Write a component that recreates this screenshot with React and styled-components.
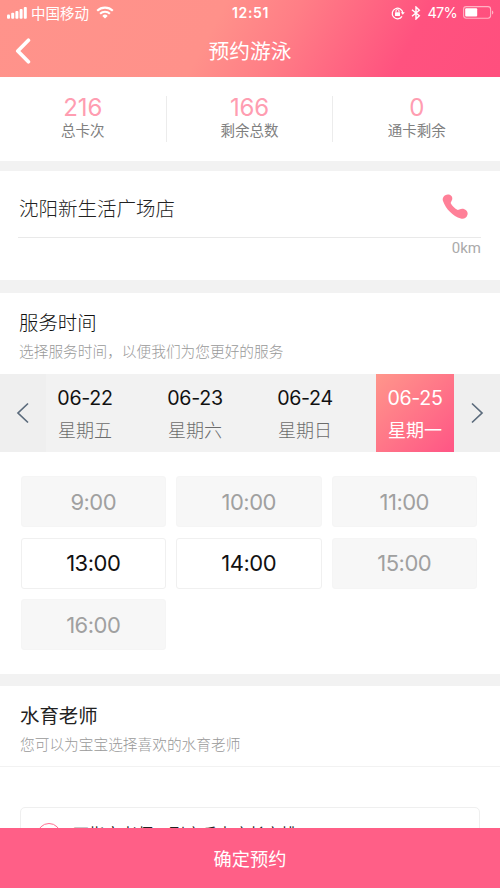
import React from "react";
import styled, { createGlobalStyle } from "styled-components";

const Global = createGlobalStyle`
  * { box-sizing: border-box; }
  html, body { margin: 0; padding: 0; }
  body {
    background: #f2f2f2;
    font-family: Inter, "Noto Sans CJK SC", sans-serif;
    color: #333;
    white-space: nowrap;
  }
  button { font: inherit; color: inherit; border: 0; background: none; padding: 0; }
  svg { display: block; }
`;

const Screen = styled.div`
  width: 500px;
  height: 888px;
  overflow: hidden;
  display: flex;
  flex-direction: column;
`;

const Header = styled.header`
  height: 77px;
  flex: none;
  color: #fff;
  background: linear-gradient(118deg, #ff938b 0%, #ff918a 42%, #ff7e86 56%, #ff527f 80%, #ff4f7e 100%);
`;

const StatusBar = styled.div`
  height: 26px;
  display: grid;
  grid-template-columns: 1fr auto 1fr;
  align-items: center;
  padding: 0 6px 1px 7px;
  font-size: 14.5px;
`;

const StatusGroup = styled.div`
  display: flex;
  align-items: center;
  gap: ${(p) => p.$gap}px;
  justify-content: ${(p) => (p.$end ? "flex-end" : "flex-start")};
`;

const Carrier = styled.span`
  font-weight: 400;
  margin-right: 3px;
`;

const Percent = styled.span`
  font-size: 14.5px;
  letter-spacing: -0.75px;
`;

const Clock = styled.span`
  font-size: 14px;
  font-weight: 600;
  letter-spacing: 0.6px;
`;

const NavBar = styled.div`
  height: 50px;
  display: grid;
  grid-template-columns: 60px 1fr 60px;
  align-items: center;
`;

const BackButton = styled.button`
  padding-left: 15px;
`;

const PageTitle = styled.h1`
  margin: 0;
  padding-top: 1px;
  font-size: 20.7px;
  font-weight: 400;
  line-height: 30px;
  text-align: center;
`;

const Stats = styled.section`
  height: 84px;
  flex: none;
  background: #fff;
  display: grid;
  grid-template-columns: repeat(3, 1fr);
  padding-top: 19px;
`;

const Stat = styled.div`
  height: 46px;
  display: flex;
  flex-direction: column;
  align-items: center;
  border-right: ${(p) => (p.$last ? "0" : "1px solid #ececec")};
`;

const StatValue = styled.span`
  font-size: 24px;
  line-height: 24px;
  font-weight: 400;
  letter-spacing: -0.1px;
  color: #ff9db1;
`;

const StatLabel = styled.span`
  font-size: 14.5px;
  line-height: 22px;
  color: #808080;
`;

const Store = styled.section`
  height: 109px;
  flex: none;
  margin-top: 10px;
  padding: 0 19px 0 18px;
  background: #fff;
`;

const StoreRow = styled.div`
  height: 67px;
  display: flex;
  align-items: center;
  justify-content: space-between;
  padding: 6px 13px 0 1px;
  border-bottom: 1px solid #e9e9e9;
`;

const StoreName = styled.span`
  font-size: 19.5px;
  font-weight: 300;
  color: #222;
`;

const Distance = styled.div`
  font-family: Roboto, sans-serif;
  font-size: 15px;
  line-height: 20px;
  text-align: right;
  color: #aaa;
`;

const Panel = styled.section`
  flex: none;
  height: ${(p) => p.$height}px;
  margin-top: ${(p) => p.$gap}px;
  background: #fff;
`;

const PanelHead = styled.div`
  height: 81px;
  padding: ${(p) => (p.$ruled ? "15px 20px 0" : "15px 19px 0")};
  border-bottom: ${(p) => (p.$ruled ? "1px solid #f2f2f2" : "0")};
`;

const PanelTitle = styled.h2`
  margin: 0;
  font-size: 19.4px;
  line-height: 30px;
  font-weight: ${(p) => (p.$strong ? 400 : 300)};
  color: ${(p) => (p.$strong ? "#222" : "#111")};
`;

const PanelHint = styled.p`
  margin: 0;
  font-size: 14.7px;
  line-height: 29px;
  font-weight: 300;
  color: #999;
`;

const DateStrip = styled.div`
  height: 78px;
  display: grid;
  grid-template-columns: 46px 408px 46px;
  background: #f2f2f2;
`;

const StripArrow = styled.button`
  display: flex;
  align-items: center;
  justify-content: center;
  background: #efefef;
`;

const Days = styled.div`
  display: flex;
  justify-content: space-between;
`;

const Day = styled.button`
  width: 78px;
  display: flex;
  flex-direction: column;
  align-items: center;
  padding-top: 9px;
  color: ${(p) => (p.$active ? "#fff" : "#111")};
  background: ${(p) => (p.$active ? "linear-gradient(135deg, #ff968b 0%, #ff7688 50%, #ff5585 100%)" : "transparent")};
`;

const DayDate = styled.span`
  font-size: 19.6px;
  line-height: 30px;
  letter-spacing: -0.3px;
`;

const DayName = styled.span`
  font-size: 18px;
  line-height: 35px;
  font-weight: ${(p) => (p.$active ? 400 : 300)};
  color: ${(p) => (p.$active ? "#fff" : "#6c6c6c")};
`;

const Slots = styled.div`
  display: grid;
  grid-template-columns: repeat(3, 145.5px);
  grid-auto-rows: 51px;
  gap: 10.7px 10px;
  padding: 24px 0 0 20.5px;
`;

const Slot = styled.button`
  border-radius: 3px;
  border: ${(p) => (p.$open ? "1.5px solid #f0f0f0" : "1px solid #f5f5f5")};
  background: ${(p) => (p.$open ? "#fff" : "#f7f7f7")};
  color: ${(p) => (p.$open ? "#111" : "#a0a0a0")};
  font-size: 22px;
  font-weight: 400;
  letter-spacing: -0.5px;
`;

const TeacherCard = styled.div`
  height: 60px;
  margin: 40px 20px 0;
  padding: 14px 16px;
  display: flex;
  gap: 12px;
  border: 1px solid #efefef;
  border-radius: 5px;
  font-size: 16px;
  line-height: 24px;
  color: #222;
`;

const Radio = styled.span`
  width: 24px;
  height: 24px;
  margin-top: 1px;
  border: 1.5px solid #ff6f91;
  border-radius: 50%;
`;

const Confirm = styled.button`
  position: fixed;
  left: 0;
  top: 828px;
  width: 500px;
  height: 60px;
  padding-bottom: 1px;
  background: #ff5f87;
  color: #fff;
  font-size: 18.2px;
  text-align: center;
`;

const SignalIcon = () => (
  <svg width="20" height="12" viewBox="0 0 20 12" fill="#fff">
    <rect x="0" y="7.5" width="3" height="4.2" rx="1" />
    <rect x="4.2" y="5.8" width="3" height="5.9" rx="1" />
    <rect x="8.4" y="4" width="3" height="7.7" rx="1" />
    <rect x="12.6" y="2" width="3" height="9.7" rx="1" />
    <rect x="16.8" y="0" width="3" height="11.7" rx="1" />
  </svg>
);

const WifiIcon = () => (
  <svg width="18" height="13" viewBox="0 0 18 13" fill="none" stroke="#fff" strokeWidth="2.1">
    <path d="M1.2 4.8a11.2 11.2 0 0 1 15.6 0" />
    <path d="M4.1 7.7a7 7 0 0 1 9.8 0" />
    <path d="M6.3 9.9a3.9 3.9 0 0 1 5.4 0L9 12.6z" fill="#fff" stroke="none" />
  </svg>
);

const RotationLockIcon = () => (
  <svg width="14" height="14" viewBox="0 0 14 14" fill="none" stroke="#fff">
    <path d="M11 10.4A5.3 5.3 0 1 1 11.8 7" strokeWidth="1.2" />
    <path d="M9.8 6.2h4l-2 2.6z" fill="#fff" stroke="none" />
    <rect x="4" y="6.2" width="5" height="3.8" rx=".5" fill="#fff" stroke="none" />
    <path d="M5 6.4V5a1.5 1.5 0 0 1 3 0v1.4" strokeWidth="1" />
  </svg>
);

const BluetoothIcon = () => (
  <svg width="10" height="14" viewBox="0 0 10 14" fill="none" stroke="#fff" strokeWidth="1.4">
    <path d="M1 3.8l7.3 6L5 13V1l3.3 3.2-7.3 6" />
  </svg>
);

const BatteryIcon = () => (
  <svg width="31" height="13" viewBox="0 0 31 13">
    <rect x=".6" y=".6" width="27" height="11.6" rx="2.6" fill="none" stroke="#ffb3c4" strokeWidth="1.1" />
    <rect x="2.2" y="2.2" width="12" height="8.4" rx="1" fill="#fff" />
    <path d="M29 4.4c1.8.6 1.8 3.4 0 4z" fill="#ffb3c4" />
  </svg>
);

const BackIcon = () => (
  <svg width="17" height="26" viewBox="0 0 17 26" fill="none" stroke="#fff" strokeWidth="3.7" strokeLinecap="round" strokeLinejoin="round">
    <path d="M13.4 2.3L2.8 13l10.6 10.8" />
  </svg>
);

const PhoneIcon = () => (
  <svg width="26" height="26" viewBox="0 0 26 26" fill="#ff8098">
    <path d="M1.3 3.2C2.5.8 5.4-.1 7.8.8c2.500 1.200 3.200 3.800 1.800 6L8.600 9.100c1.700 3.200 4 5.400 7.200 6.900l2.200-.8c1.200-.6 2.800-.7 4.400 0 2.600 1.100 3.800 3.400 3 5.800-1 3-3.400 4.300-6.600 3.600C10.800 22 3.800 15 .9 6.700.5 5.300.7 4.200 1.300 3.200z" />
  </svg>
);

const ChevronIcon = ({ d }) => (
  <svg width="14" height="22" viewBox="0 0 14 22" fill="none" stroke="#5b6b7c" strokeWidth="1.7">
    <path d={d} />
  </svg>
);

const stats = [
  ["216", "总卡次"],
  ["166", "剩余总数"],
  ["0", "通卡剩余"],
];

const days = [
  ["06-22", "星期五"],
  ["06-23", "星期六"],
  ["06-24", "星期日"],
  ["06-25", "星期一"],
];

const slots = [
  ["9:00", false],
  ["10:00", false],
  ["11:00", false],
  ["13:00", true],
  ["14:00", true],
  ["15:00", false],
  ["16:00", false],
];

export default function App() {
  return (
    <Screen>
      <Global />
      <Header>
        <StatusBar>
          <StatusGroup $gap={4}>
            <SignalIcon />
            <Carrier>中国移动</Carrier>
            <WifiIcon />
          </StatusGroup>
          <Clock>12:51</Clock>
          <StatusGroup $gap={6} $end>
            <RotationLockIcon />
            <BluetoothIcon />
            <Percent>47%</Percent>
            <BatteryIcon />
          </StatusGroup>
        </StatusBar>
        <NavBar>
          <BackButton aria-label="返回">
            <BackIcon />
          </BackButton>
          <PageTitle>预约游泳</PageTitle>
        </NavBar>
      </Header>

      <Stats>
        {stats.map(([value, label], i) => (
          <Stat key={label} $last={i === stats.length - 1}>
            <StatValue>{value}</StatValue>
            <StatLabel>{label}</StatLabel>
          </Stat>
        ))}
      </Stats>

      <Store>
        <StoreRow>
          <StoreName>沈阳新生活广场店</StoreName>
          <PhoneIcon />
        </StoreRow>
        <Distance>0km</Distance>
      </Store>

      <Panel $height={381} $gap={13}>
        <PanelHead>
          <PanelTitle>服务时间</PanelTitle>
          <PanelHint>选择服务时间，以便我们为您更好的服务</PanelHint>
        </PanelHead>
        <DateStrip>
          <StripArrow aria-label="上一页">
            <ChevronIcon d="M12 1.500L2 11l10 9.500" />
          </StripArrow>
          <Days>
            {days.map(([date, name], i) => (
              <Day key={date} $active={i === 3}>
                <DayDate>{date}</DayDate>
                <DayName $active={i === 3}>{name}</DayName>
              </Day>
            ))}
          </Days>
          <StripArrow aria-label="下一页">
            <ChevronIcon d="M2 1.500L12 11 2 20.500" />
          </StripArrow>
        </DateStrip>
        <Slots>
          {slots.map(([time, open]) => (
            <Slot key={time} $open={open}>
              {time}
            </Slot>
          ))}
        </Slots>
      </Panel>

      <Panel $height={202} $gap={12}>
        <PanelHead $ruled>
          <PanelTitle $strong>水育老师</PanelTitle>
          <PanelHint>您可以为宝宝选择喜欢的水育老师</PanelHint>
        </PanelHead>
        <TeacherCard>
          <Radio />
          <span>不指定老师，到店后由店长安排</span>
        </TeacherCard>
      </Panel>

      <Confirm>确定预约</Confirm>
    </Screen>
  );
}
